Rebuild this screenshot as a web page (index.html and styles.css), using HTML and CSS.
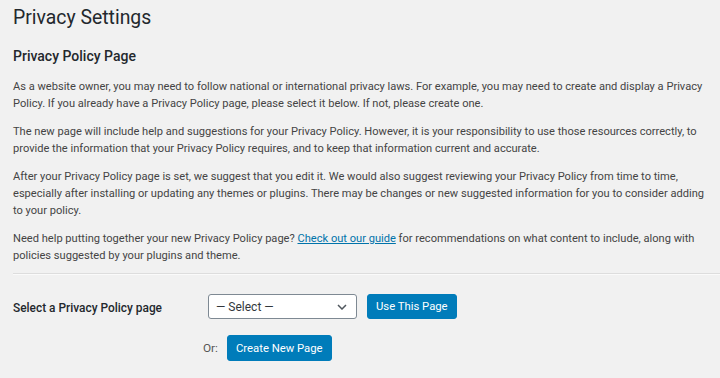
FILE: index.html
```html
<!DOCTYPE html>
<html lang="en">
<head>
<meta charset="utf-8">
<title>Privacy Settings</title>
<link rel="stylesheet" href="styles.css">
</head>
<body>
<div class="wrap">
  <h1 class="title">Privacy Settings</h1>
  <h2 class="section">Privacy Policy Page</h2>
  <p>As a website owner, you may need to follow national or international privacy laws. For example, you may need to create and display a Privacy Policy. If you already have a Privacy Policy page, please select it below. If not, please create one.</p>
  <p>The new page will include help and suggestions for your Privacy Policy. However, it is your responsibility to use those resources correctly, to provide the information that your Privacy Policy requires, and to keep that information current and accurate.</p>
  <p>After your Privacy Policy page is set, we suggest that you edit it. We would also suggest reviewing your Privacy Policy from time to time, especially after installing or updating any themes or plugins. There may be changes or new suggested information for you to consider adding to your policy.</p>
  <p>Need help putting together your new Privacy Policy page? <a href="#">Check out our guide</a> for recommendations on what content to include, along with policies suggested by your plugins and theme.</p>
  <hr class="divider">
  <div class="form-row">
    <label class="row-label" for="page">Select a Privacy Policy page</label>
    <div class="controls">
      <div class="select" id="page">
        <span class="select-text">— Select —</span>
        <svg class="chev" width="10" height="6" viewBox="0 0 10 6"><path d="M1 1 L5 5 L9 1" fill="none" stroke="#50575e" stroke-width="1.5"/></svg>
      </div>
      <button class="btn">Use This Page</button>
    </div>
  </div>
  <div class="or-row">
    <span class="or">Or:</span>
    <button class="btn btn-create">Create New Page</button>
  </div>
</div>
</body>
</html>
```
FILE: styles.css
```css
html, body {
  margin: 0;
  padding: 0;
  background: #f1f1f1;
}
body {
  font-family: Roboto, "Noto Sans", sans-serif;
  color: #444;
  overflow: hidden;
}
.wrap {
  padding: 0 8px 0 13px;
}
.title {
  font-size: 19.4px;
  font-weight: 400;
  line-height: 26px;
  margin: 0;
  padding-top: 5px;
  color: #23282d;
}
.section {
  font-size: 14px;
  font-weight: 500;
  line-height: 18px;
  margin: 16px 0 0;
  color: #23282d;
}
p {
  font-size: 11.1px;
  line-height: 17px;
  margin: 11px 0 0;
}
.section + p {
  margin-top: 13px;
}
a {
  color: #0073aa;
}
.divider {
  border: 0;
  border-top: 1px solid #ddd;
  border-bottom: 1px solid #fafafa;
  margin: 9px -8px 0 0;
  height: 0;
}
.form-row {
  display: flex;
  align-items: center;
  margin-top: 19px;
}
.row-label {
  width: 195px;
  font-size: 11.9px;
  font-weight: 500;
  color: #23282d;
  padding-top: 2px;
}
.controls {
  display: flex;
  align-items: center;
  gap: 10px;
}
.select {
  box-sizing: border-box;
  width: 149px;
  height: 25px;
  background: #fff;
  border: 1px solid #7e8993;
  border-radius: 3px;
  display: flex;
  align-items: center;
  justify-content: space-between;
  padding: 0 9px 0 7px;
  font-size: 12px;
  color: #32373c;
}
.btn {
  box-sizing: border-box;
  height: 25px;
  background: #007cba;
  color: #fff;
  border: 1px solid #007cba;
  border-radius: 3px;
  font-family: inherit;
  font-size: 11.3px;
  padding: 0 8px;
}
.or-row {
  display: flex;
  align-items: center;
  gap: 9px;
  margin-top: 16px;
  padding-left: 190px;
}
.or {
  font-size: 11.8px;
  color: #555;
}
.btn-create {
  height: 26px;
}
```
